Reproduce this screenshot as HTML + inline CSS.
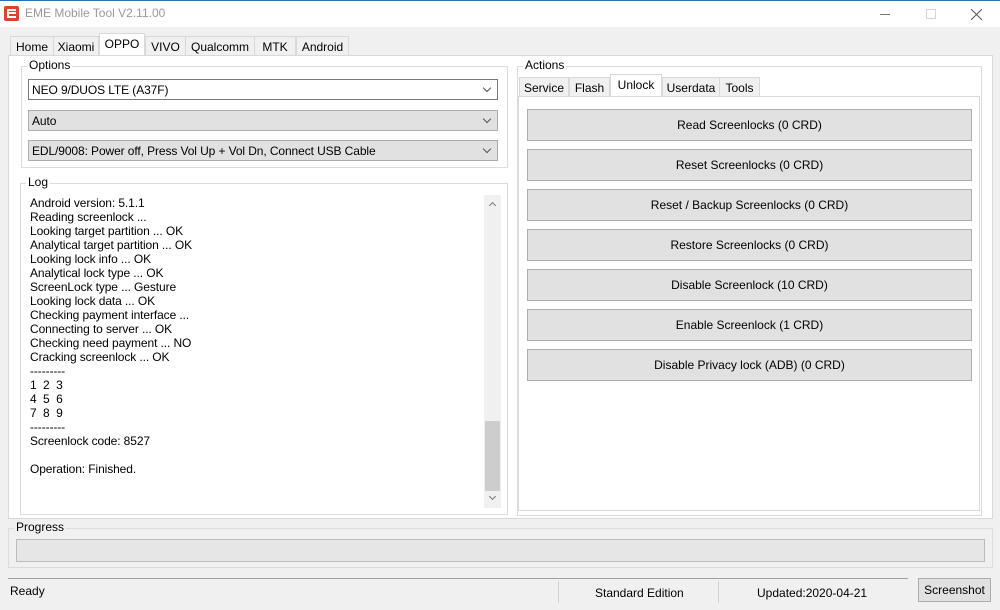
<!DOCTYPE html>
<html><head><style>
*{box-sizing:border-box;margin:0;padding:0}
body{width:1000px;height:610px;background:#f0f0f0;font-family:"Liberation Sans",sans-serif;font-size:12px;color:#000;position:relative;overflow:hidden}
.a{position:absolute}
.title{left:0;top:0;width:1000px;height:27px;background:#fff;border-top:1px solid #2b6fb3}
.tab{position:absolute;height:19px;border:1px solid #d9d9d9;border-bottom:none;background:#f0f0f0;padding-top:3px;text-align:center;font-size:12px}
.tab.sel{background:#fff;height:22px;border-color:#d9d9d9;top:-3px!important}
.grp{position:absolute;border:1px solid #dcdcdc}
.lg{position:absolute;background:#f0f0f0;padding:0 2px;top:-9px;font-size:12px;line-height:14px}
.lgw{background:#fff}
.cb{position:absolute;border:1px solid #adadad;background:#e1e1e1;padding:3px 0 0 3px;font-size:12px;height:21px;letter-spacing:-0.1px}
.cb:after{content:"";position:absolute;right:7px;top:5px;width:5px;height:5px;border-right:1px solid #555;border-bottom:1px solid #555;transform:rotate(45deg)}
.btn{position:absolute;left:527px;width:445px;height:32px;border:1px solid #adadad;background:#e1e1e1;text-align:center;line-height:30px;font-size:12px}
.log{position:absolute;left:30px;top:196px;line-height:14px;font-size:12px;white-space:pre;letter-spacing:-0.1px}
.chev{position:absolute;width:5px;height:5px;border-right:1px solid #777;border-bottom:1px solid #777}
</style></head><body>
<div class="a title">
 <div class="a" style="left:4px;top:5px;width:15px;height:15px;background:#d9432f;border-radius:2px"><div class="a" style="left:3px;top:3px;width:9px;height:9px;border:2px solid #fff;border-right:none"></div><div class="a" style="left:5px;top:6px;width:7px;height:2px;background:#fff"></div></div>
 <div class="a" style="left:25px;top:5px;color:#999;font-size:12px">EME Mobile Tool V2.11.00</div>
 <div class="a" style="left:880px;top:13px;width:10px;height:1px;background:#777"></div>
 <div class="a" style="left:926px;top:8px;width:10px;height:10px;border:1px solid #d5d5d5"></div>
 <svg class="a" style="left:971px;top:8px" width="11" height="11"><path d="M0 0L11 11M11 0L0 11" stroke="#555" stroke-width="1"/></svg>
</div>
<div class="a" style="left:10px;top:36px;width:340px;height:20px">
 <div class="tab" style="left:0;top:0;width:44px">Home</div>
 <div class="tab" style="left:43px;top:0;width:46px">Xiaomi</div>
 <div class="tab sel" style="left:89px;top:0;width:46px">OPPO</div>
 <div class="tab" style="left:135px;top:0;width:41px">VIVO</div>
 <div class="tab" style="left:175px;top:0;width:70px">Qualcomm</div>
 <div class="tab" style="left:244px;top:0;width:42px">MTK</div>
 <div class="tab" style="left:286px;top:0;width:53px">Android</div>
</div>
<div class="a" style="left:8px;top:55px;width:985px;height:464px;background:#fff;border:1px solid #d9d9d9"></div>
<div class="grp" style="left:21px;top:66px;width:487px;height:102px"><span class="lg lgw" style="left:5px">Options</span></div>
<div class="cb" style="left:28px;top:79px;width:470px;background:#fff;border-color:#7a7a7a">NEO 9/DUOS LTE (A37F)</div>
<div class="cb" style="left:28px;top:110px;width:470px">Auto</div>
<div class="cb" style="left:28px;top:140px;width:470px">EDL/9008: Power off, Press Vol Up + Vol Dn, Connect USB Cable</div>
<div class="grp" style="left:20px;top:183px;width:488px;height:332px"><span class="lg lgw" style="left:5px">Log</span></div>
<div class="a" style="left:484px;top:195px;width:17px;height:313px;background:#f0f0f0"></div>
<div class="a" style="left:485px;top:421px;width:15px;height:70px;background:#cdcdcd"></div>
<div class="chev" style="left:490px;top:203px;transform:rotate(-135deg)"></div>
<div class="chev" style="left:490px;top:494px;transform:rotate(45deg)"></div>
<div class="log">Android version: 5.1.1
Reading screenlock ...
Looking target partition ... OK
Analytical target partition ... OK
Looking lock info ... OK
Analytical lock type ... OK
ScreenLock type ... Gesture
Looking lock data ... OK
Checking payment interface ...
Connecting to server ... OK
Checking need payment ... NO
Cracking screenlock ... OK
---------
1  2  3
4  5  6
7  8  9
---------
Screenlock code: 8527

Operation: Finished.</div>
<div class="grp" style="left:517px;top:66px;width:465px;height:450px"><span class="lg lgw" style="left:5px">Actions</span></div>
<div class="a" style="left:519px;top:77px;width:250px;height:20px">
 <div class="tab" style="left:0;top:0;width:50px">Service</div>
 <div class="tab" style="left:50px;top:0;width:41px">Flash</div>
 <div class="tab sel" style="left:91px;top:0;width:52px">Unlock</div>
 <div class="tab" style="left:143px;top:0;width:58px">Userdata</div>
 <div class="tab" style="left:200px;top:0;width:41px">Tools</div>
</div>
<div class="a" style="left:518px;top:96px;width:462px;height:415px;border:1px solid #d9d9d9;background:#fff"></div>
<div class="btn" style="top:109px">Read Screenlocks (0 CRD)</div>
<div class="btn" style="top:149px">Reset Screenlocks (0 CRD)</div>
<div class="btn" style="top:189px">Reset / Backup Screenlocks (0 CRD)</div>
<div class="btn" style="top:229px">Restore Screenlocks (0 CRD)</div>
<div class="btn" style="top:269px">Disable Screenlock (10 CRD)</div>
<div class="btn" style="top:309px">Enable Screenlock (1 CRD)</div>
<div class="btn" style="top:349px">Disable Privacy lock (ADB) (0 CRD)</div>
<div class="grp" style="left:8px;top:528px;width:985px;height:40px"><span class="lg" style="left:5px">Progress</span></div>
<div class="a" style="left:16px;top:539px;width:969px;height:23px;background:#e6e6e6;border:1px solid #bcbcbc"></div>
<div class="a" style="left:8px;top:578px;width:900px;height:26px;border-top:1px solid #a0a0a0;background:#f0f0f0"></div>
<div class="a" style="left:10px;top:584px">Ready</div>
<div class="a" style="left:558px;top:581px;width:1px;height:22px;background:#d0d0d0"></div>
<div class="a" style="left:718px;top:581px;width:1px;height:22px;background:#d0d0d0"></div>
<div class="a" style="left:595px;top:586px">Standard Edition</div>
<div class="a" style="left:757px;top:586px">Updated:2020-04-21</div>
<div class="a" style="left:918px;top:578px;width:73px;height:24px;border:1px solid #adadad;background:#e1e1e1;text-align:center;line-height:22px">Screenshot</div>
</body></html>
